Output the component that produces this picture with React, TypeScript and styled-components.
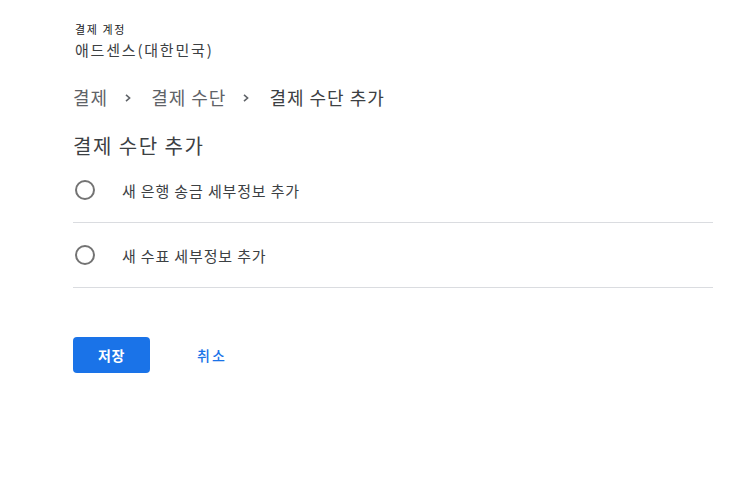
import React from "react";
import styled, { createGlobalStyle } from "styled-components";

const Global = createGlobalStyle`
  html, body { margin: 0; padding: 0; background: #fff; }
  body { font-family: "Noto Sans CJK KR", "Noto Sans", Roboto, sans-serif; color: #202124; }
`;

const Page = styled.div`
  padding: 21px 0 0 73px;
  width: 640px;
`;

const Account = styled.div`
  display: flex;
  flex-direction: column;
  padding-left: 2px;
`;

const AccountLabel = styled.div`
  font-size: 11px;
  line-height: 16px;
  letter-spacing: 1.6px;
  color: #202124;
`;

const AccountName = styled.div`
  margin-top: 3px;
  font-size: 15px;
  line-height: 20px;
  letter-spacing: 1.8px;
  color: #3c4043;
`;

const Crumbs = styled.nav`
  margin-top: 25px;
  display: flex;
  align-items: center;
  font-size: 18px;
  line-height: 24px;
  letter-spacing: 1px;
`;

const Crumb = styled.span<{ $current?: boolean }>`
  color: ${(p) => (p.$current ? "#3c4043" : "#5f6368")};
`;

const Sep = styled.span`
  display: inline-flex;
  align-items: center;
  margin: 2px 20px 0 17px;
`;

const Title = styled.h1`
  margin: 25px 0 0;
  font-size: 20px;
  font-weight: 400;
  line-height: 24px;
  letter-spacing: 1.5px;
  color: #3c4043;
`;

const Options = styled.div`
  display: flex;
  flex-direction: column;
`;

const Row = styled.label`
  height: 64px;
  display: flex;
  align-items: center;
  border-bottom: 1px solid #dadce0;
  cursor: pointer;
`;

const Radio = styled.span`
  box-sizing: border-box;
  width: 20px;
  height: 20px;
  border: 2px solid #737373;
  border-radius: 50%;
  margin-left: 2px;
  flex: none;
`;

const RowText = styled.span`
  margin-left: 27px;
  font-size: 15px;
  letter-spacing: 0.85px;
  color: #3c4043;
`;

const Actions = styled.div`
  margin-top: 49px;
  display: flex;
  align-items: center;
`;

const SaveButton = styled.button`
  width: 77px;
  height: 36px;
  border: none;
  border-radius: 4px;
  background: #1a73e8;
  color: #fff;
  font-family: inherit;
  font-size: 14px;
  font-weight: 700;
  letter-spacing: 0.5px;
  cursor: pointer;
`;

const CancelButton = styled.button`
  margin-left: 47px;
  background: none;
  border: none;
  padding: 0;
  color: #1a73e8;
  font-family: inherit;
  font-size: 14px;
  font-weight: 500;
  letter-spacing: 2px;
  cursor: pointer;
`;

const Chevron = () => (
  <svg width="6" height="8" viewBox="0 0 6 8">
    <path d="M1 0.8 L4.6 4 L1 7.2" fill="none" stroke="#5f6368" strokeWidth="1.6" />
  </svg>
);

export default function App() {
  return (
    <>
      <Global />
      <Page>
        <Account>
          <AccountLabel>결제 계정</AccountLabel>
          <AccountName>애드센스(대한민국)</AccountName>
        </Account>
        <Crumbs>
          <Crumb>결제</Crumb>
          <Sep><Chevron /></Sep>
          <Crumb>결제 수단</Crumb>
          <Sep><Chevron /></Sep>
          <Crumb $current>결제 수단 추가</Crumb>
        </Crumbs>
        <Title>결제 수단 추가</Title>
        <Options>
          <Row>
            <Radio />
            <RowText>새 은행 송금 세부정보 추가</RowText>
          </Row>
          <Row>
            <Radio />
            <RowText>새 수표 세부정보 추가</RowText>
          </Row>
        </Options>
        <Actions>
          <SaveButton>저장</SaveButton>
          <CancelButton>취소</CancelButton>
        </Actions>
      </Page>
    </>
  );
}
